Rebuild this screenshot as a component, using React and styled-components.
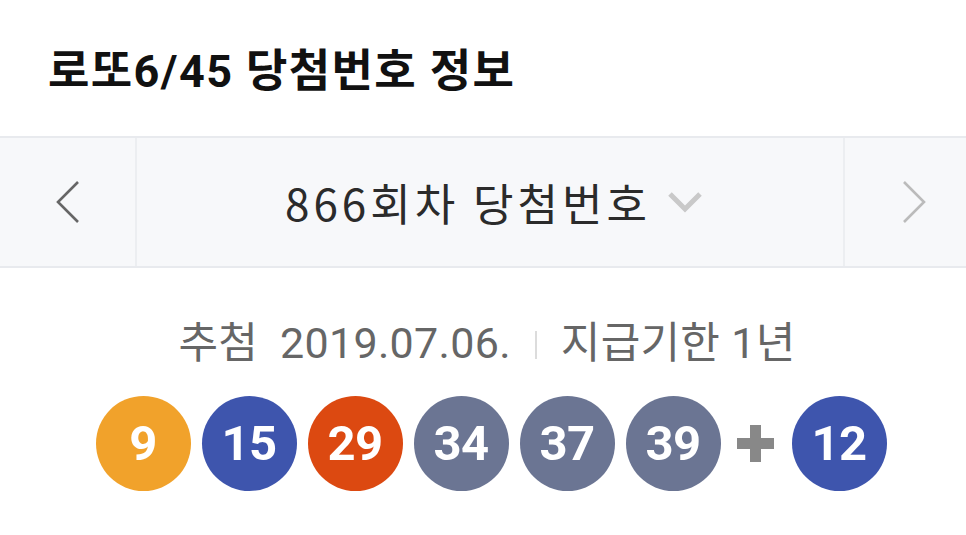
import React from "react";
import styled, { createGlobalStyle } from "styled-components";

const Global = createGlobalStyle`
  html, body { margin: 0; padding: 0; background: #ffffff; }
  body { font-family: Roboto, "Noto Sans CJK KR", sans-serif; }
  * { box-sizing: border-box; }
`;

const Page = styled.div`
  width: 966px;
  height: 535px;
  overflow: hidden;
  background: #fff;
`;

const Title = styled.h1`
  margin: 0;
  height: 136px;
  display: flex;
  align-items: center;
  padding: 0 0 2px 48px;
  font-family: Roboto, "Noto Sans CJK KR", sans-serif;
  font-weight: 700;
  font-size: 45px;
  letter-spacing: 1.4px;
  color: #111;
`;

const Nav = styled.div`
  display: flex;
  height: 132px;
  border-top: 2px solid #e8eaee;
  border-bottom: 2px solid #e8eaee;
  background: #f7f8fa;
`;

const ArrowCell = styled.div`
  width: ${(p) => p.$w}px;
  flex: none;
  display: flex;
  align-items: center;
  justify-content: ${(p) => (p.$side === "left" ? "center" : "flex-start")};
  padding-left: ${(p) => (p.$side === "left" ? 0 : 56)}px;
  border-right: ${(p) => (p.$side === "left" ? "2px solid #eceef1" : "none")};
  border-left: ${(p) => (p.$side === "right" ? "2px solid #eceef1" : "none")};
`;

const Center = styled.div`
  flex: 1;
  display: flex;
  align-items: center;
  justify-content: center;
  gap: 16px;
  padding-left: 8px;
`;

const RoundText = styled.span`
  font-family: "Noto Sans CJK KR", sans-serif;
  font-size: 44px;
  font-weight: 400;
  letter-spacing: 4px;
  color: #2b2b2b;
`;

const Info = styled.div`
  display: flex;
  justify-content: center;
  align-items: center;
  padding: 42px 0 0 8px;
  font-family: Roboto, "Noto Sans CJK KR", sans-serif;
  font-size: 43px;
  letter-spacing: 0.3px;
  color: #666;
  gap: 24px;
  height: 100px;
`;

const Divider = styled.span`
  width: 2px;
  height: 28px;
  background: #dcdcdc;
  margin-top: 12px;
`;

const Balls = styled.div`
  display: flex;
  justify-content: center;
  align-items: center;
  gap: 11px;
  padding: 28px 0 0 16px;
`;

const Ball = styled.div`
  width: 95px;
  height: 95px;
  border-radius: 50%;
  background: ${(p) => p.$c};
  color: #fff;
  font-family: Roboto, sans-serif;
  font-weight: 700;
  font-size: 49px;
  display: flex;
  align-items: center;
  justify-content: center;
  letter-spacing: -0.5px;
`;

const Plus = styled.div`
  width: 37px;
  height: 37px;
  margin: 0 7px 0 5px;
  position: relative;
  &::before, &::after {
    content: "";
    position: absolute;
    background: #888;
  }
  &::before { left: 0; right: 0; top: 13px; height: 11px; }
  &::after { top: 0; bottom: 0; left: 13px; width: 11px; }
`;

const colors = {
  y: "#f1a22b",
  b: "#3e55ad",
  r: "#dc4911",
  g: "#6b7593",
};

const nums = [
  [9, "y"],
  [15, "b"],
  [29, "r"],
  [34, "g"],
  [37, "g"],
  [39, "g"],
];

export default function App() {
  return (
    <Page>
      <Global />
      <Title>로또6/45 당첨번호 정보</Title>
      <Nav>
        <ArrowCell $w={137} $side="left">
          <svg width="26" height="44" viewBox="0 0 26 44">
            <path d="M23 2 L3 22 L23 42" fill="none" stroke="#666" strokeWidth="2.6" />
          </svg>
        </ArrowCell>
        <Center>
          <RoundText>866회차 당첨번호</RoundText>
          <svg width="36" height="22" viewBox="0 0 36 22">
            <path d="M3 3 L18 18 L33 3" fill="none" stroke="#c9c9c9" strokeWidth="5" />
          </svg>
        </Center>
        <ArrowCell $w={123} $side="right">
          <svg width="26" height="44" viewBox="0 0 26 44">
            <path d="M3 2 L23 22 L3 42" fill="none" stroke="#bbb" strokeWidth="2.6" />
          </svg>
        </ArrowCell>
      </Nav>
      <Info>
        <span>추첨&nbsp; 2019.07.06.</span>
        <Divider />
        <span>지급기한 1년</span>
      </Info>
      <Balls>
        {nums.map(([n, c]) => (
          <Ball key={n} $c={colors[c]}>{n}</Ball>
        ))}
        <Plus />
        <Ball $c={colors.b}>12</Ball>
      </Balls>
    </Page>
  );
}
